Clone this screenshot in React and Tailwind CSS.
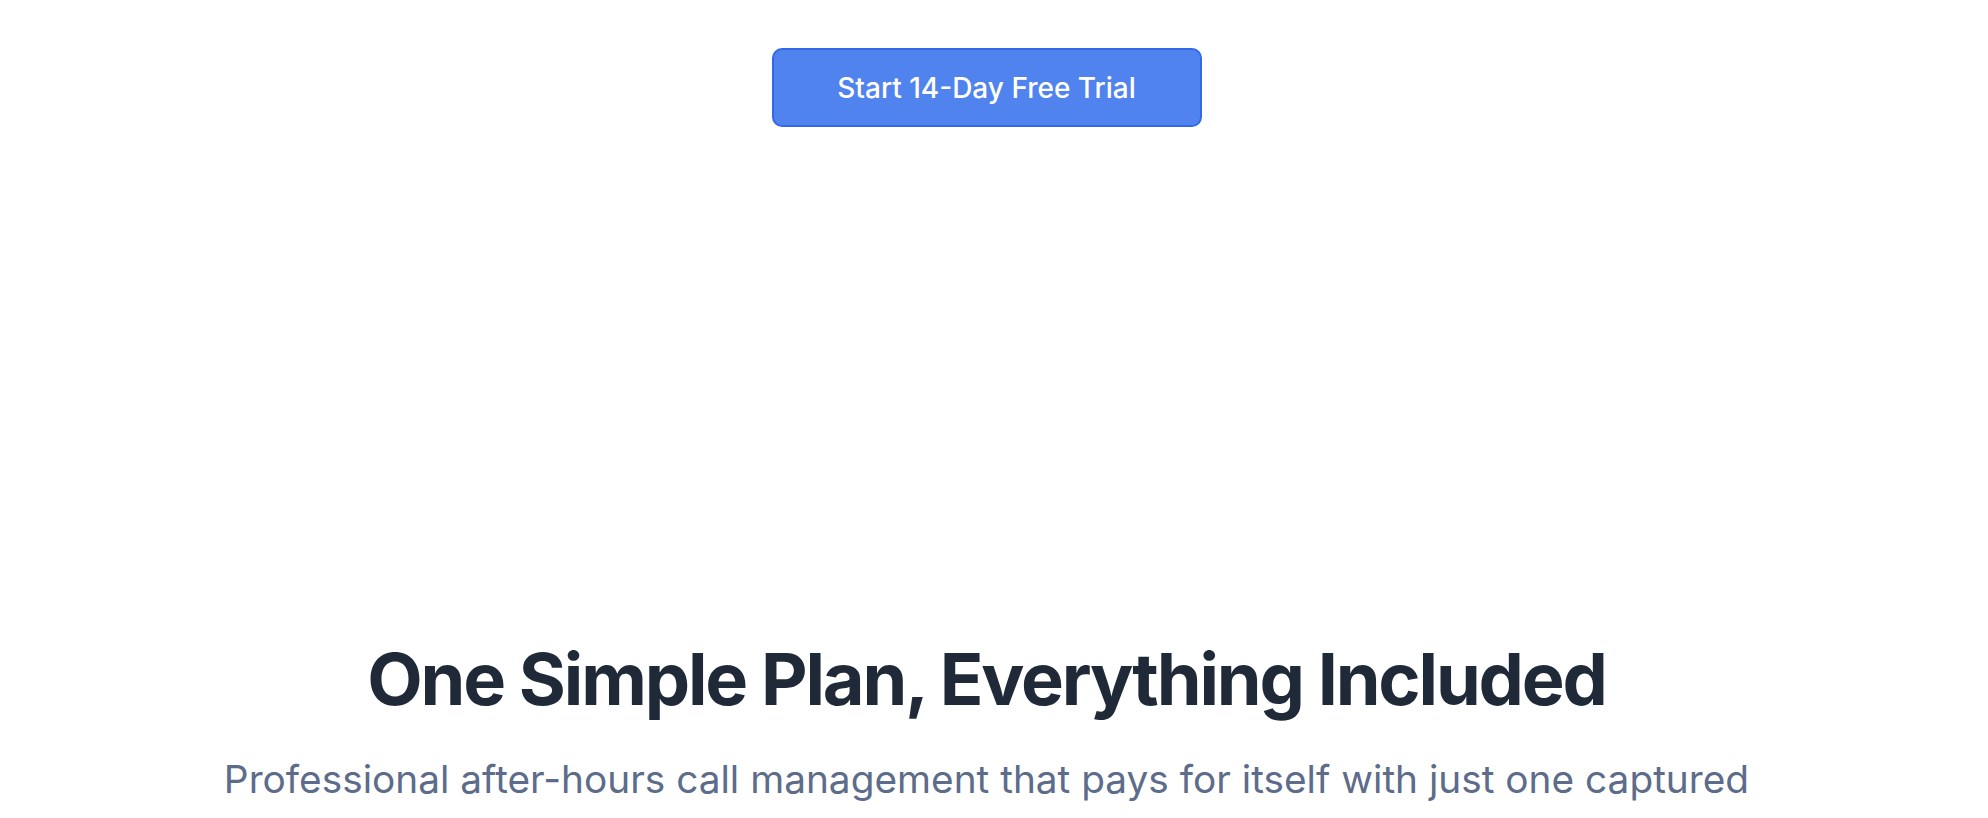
import React from 'react';

const App = () => {
    return (
        <div className="min-h-screen bg-white pr-[15px] font-['Inter',_'Liberation_Sans',_sans-serif]">
            {/* CTA */}
            <div className="flex justify-center pt-[48px]">
                <button className="w-[430px] h-[79px] rounded-[10px] border-2 border-[#3369e8] bg-[#5183ef] text-white text-[28px] font-medium">
                    Start 14-Day Free Trial
                </button>
            </div>

            {/* Pricing header */}
            <div className="mt-[516px] flex flex-col items-center text-center px-8">
                <h2 className="text-[72px] leading-none font-bold tracking-[-0.03em] text-[#1f2937]">
                    One Simple Plan, Everything Included
                </h2>
                <p className="mt-[35px] max-w-[1600px] text-[38.8px] leading-[1.5] text-[#5c6c8a]">
                    Professional after-hours call management that pays for itself with just one captured emergency call
                </p>
            </div>
        </div>
    );
};

export default App;
